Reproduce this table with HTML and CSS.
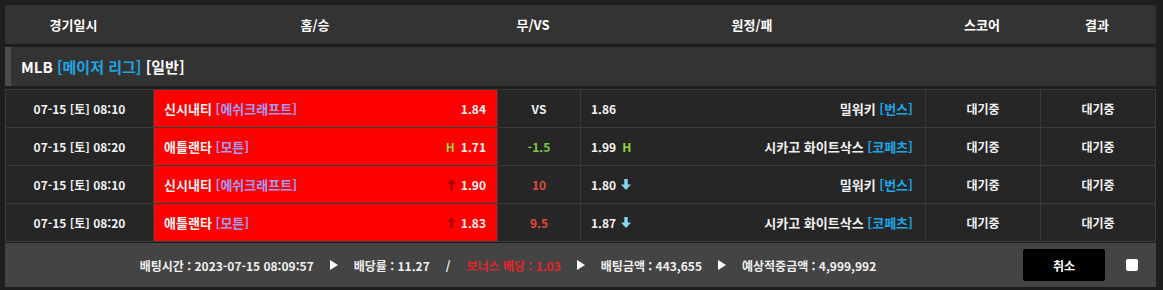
FILE: index.html
```html
<!DOCTYPE html>
<html lang="ko">
<head>
<meta charset="utf-8">
<link rel="stylesheet" href="styles.css">
</head>
<body>
<div class="wrap">
  <div class="head">
    <div>경기일시</div>
    <div>홈/승</div>
    <div>무/VS</div>
    <div>원정/패</div>
    <div>스코어</div>
    <div>결과</div>
  </div>
  <div class="league">MLB <span class="blue">[메이저 리그]</span> [일반]</div>
  <div class="rows">
    <div class="row">
      <div class="cell date">07-15 [토] 08:10</div>
      <div class="cell home"><span class="team">신시내티 <span class="lav">[에쉬크래프트]</span></span><span class="odd">1.84</span></div>
      <div class="cell vs">VS</div>
      <div class="cell away"><span class="odd">1.86</span><span class="team">밀워키 <span class="blue">[번스]</span></span></div>
      <div class="cell mid">대기중</div>
      <div class="cell mid">대기중</div>
    </div>
    <div class="row">
      <div class="cell date">07-15 [토] 08:20</div>
      <div class="cell home"><span class="team">애틀랜타 <span class="lav">[모튼]</span></span><span class="odd"><span class="h">H</span>1.71</span></div>
      <div class="cell vs green">-1.5</div>
      <div class="cell away"><span class="odd">1.99<span class="h after">H</span></span><span class="team">시카고 화이트삭스 <span class="blue">[코페츠]</span></span></div>
      <div class="cell mid">대기중</div>
      <div class="cell mid">대기중</div>
    </div>
    <div class="row">
      <div class="cell date">07-15 [토] 08:10</div>
      <div class="cell home"><span class="team">신시내티 <span class="lav">[에쉬크래프트]</span></span><span class="odd"><svg class="arr" width="9" height="11" viewBox="0 0 9 11"><path d="M4.5 0 L9 5 L6 5 L6 11 L3 11 L3 5 L0 5 Z" fill="#b30000"/></svg>1.90</span></div>
      <div class="cell vs red">10</div>
      <div class="cell away"><span class="odd">1.80<svg class="arr after" width="10" height="11" viewBox="0 0 10 11"><path d="M5 11 L10 5.5 L6.7 5.5 L6.7 0 L3.3 0 L3.3 5.5 L0 5.5 Z" fill="#86d9f2"/></svg></span><span class="team">밀워키 <span class="blue">[번스]</span></span></div>
      <div class="cell mid">대기중</div>
      <div class="cell mid">대기중</div>
    </div>
    <div class="row">
      <div class="cell date">07-15 [토] 08:20</div>
      <div class="cell home"><span class="team">애틀랜타 <span class="lav">[모튼]</span></span><span class="odd"><svg class="arr" width="9" height="11" viewBox="0 0 9 11"><path d="M4.5 0 L9 5 L6 5 L6 11 L3 11 L3 5 L0 5 Z" fill="#b30000"/></svg>1.83</span></div>
      <div class="cell vs red">9.5</div>
      <div class="cell away"><span class="odd">1.87<svg class="arr after" width="10" height="11" viewBox="0 0 10 11"><path d="M5 11 L10 5.5 L6.7 5.5 L6.7 0 L3.3 0 L3.3 5.5 L0 5.5 Z" fill="#86d9f2"/></svg></span><span class="team">시카고 화이트삭스 <span class="blue">[코페츠]</span></span></div>
      <div class="cell mid">대기중</div>
      <div class="cell mid">대기중</div>
    </div>
  </div>
  <div class="foot">
    <div class="info">
      <span>배팅시간 : 2023-07-15 08:09:57</span>
      <span class="tri"></span>
      <span>배당률 : 11.27</span>
      <span class="slash">/</span>
      <span class="bonus">보너스 배당 : 1.03</span>
      <span class="tri"></span>
      <span>배팅금액 : 443,655</span>
      <span class="tri"></span>
      <span>예상적중금액 : 4,999,992</span>
    </div>
    <button class="cancel">취소</button>
    <span class="check"></span>
  </div>
</div>
</body>
</html>
```

FILE: styles.css
```css
* { box-sizing: border-box; }
html, body {
  margin: 0;
  background: #1e1e1e;
}
body {
  font-family: "Noto Sans CJK KR", "Liberation Sans", sans-serif;
  font-weight: 700;
  color: #f2f2f2;
  font-size: 12px;
}
.wrap {
  width: 1151px;
  margin: 5px 0 0 5px;
}
.head {
  display: grid;
  grid-template-columns: 137px 346px 90px 348px 112px 118px;
  height: 39px;
  background: #333333;
  border-radius: 2px;
  align-items: center;
  font-size: 13px;
  color: #ffffff;
}
.head > div { text-align: center; }
.league {
  margin-top: 3px;
  height: 39px;
  background: #333333;
  border-left: 6px solid #4d4d4d;
  padding-left: 10px;
  display: flex;
  align-items: center;
  font-size: 15px;
  color: #ffffff;
  white-space: pre;
}
.blue { color: #1ea5e6; }
.lav { color: #a09cf4; }
.rows {
  margin-top: 3px;
  background: #3b3b3b;
  padding: 1px;
  display: flex;
  flex-direction: column;
  gap: 1px;
}
.row {
  display: grid;
  grid-template-columns: 147px 343px 82px 344px 114px 114px;
  gap: 1px;
  height: 37px;
}
.cell {
  background: #262626;
  display: flex;
  align-items: center;
  white-space: nowrap;
}
.team { font-size: 13px; }
.date, .vs, .mid { justify-content: center; }
.home {
  background: #ff0000;
  box-shadow: inset 0 0 0 1px #e51010;
  justify-content: space-between;
  padding: 0 11px 0 10px;
}
.away {
  justify-content: space-between;
  padding: 0 12px 0 10px;
}
.odd { display: flex; align-items: center; }
.h { color: #8fd43a; margin-right: 6px; }
.h.after { margin: 0 0 0 6px; }
.arr { margin-right: 5px; }
.arr.after { margin: 0 0 0 5px; }
.green { color: #7dc843; }
.red { color: #e2493b; }
.foot {
  margin-top: 1px;
  height: 44px;
  background: #444444;
  display: flex;
  align-items: center;
  padding-right: 18px;
}
.info {
  flex: 1;
  display: flex;
  align-items: center;
  justify-content: center;
  gap: 16px;
  color: #f0f0f0;
}
.tri {
  width: 0;
  height: 0;
  border-left: 8px solid #ffffff;
  border-top: 5px solid transparent;
  border-bottom: 5px solid transparent;
}
.bonus { color: #e3242b; }
.slash { color: #f0f0f0; }
.cancel {
  width: 82px;
  height: 32px;
  background: #000000;
  border: none;
  border-radius: 2px;
  color: #ffffff;
  font-family: inherit;
  font-weight: 700;
  font-size: 12px;
  margin-left: 12px;
}
.check {
  width: 12px;
  height: 12px;
  background: #ffffff;
  border-radius: 2px;
  margin-left: 21px;
}
```
